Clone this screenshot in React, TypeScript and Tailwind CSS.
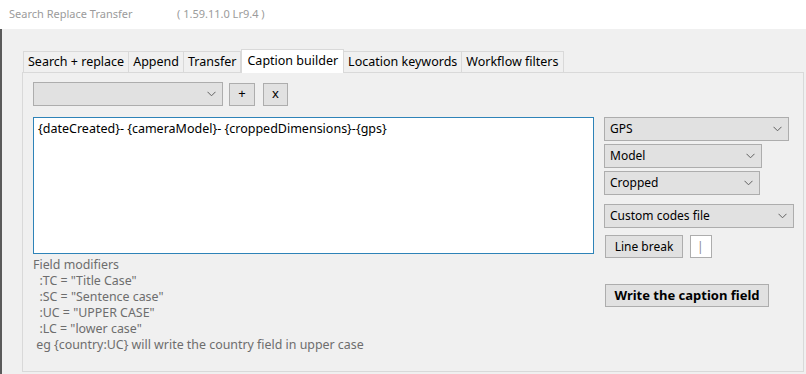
import React from "react";

const font = { fontFamily: '"Noto Sans", "Open Sans", sans-serif' };

function Chevron() {
  return (
    <svg width="9" height="6" viewBox="0 0 9 6" className="shrink-0">
      <path d="M0.5 0.8 L4.5 4.8 L8.5 0.8" fill="none" stroke="#606060" strokeWidth="1" />
    </svg>
  );
}

function Combo({ label, w }: { label: string; w: string }) {
  return (
    <div
      className={`${w} h-[24px] flex items-center justify-between pl-[5px] pr-[6px] bg-[#e1e1e1] border border-[#adadad] text-[12px] text-[#000]`}
    >
      <span>{label}</span>
      <Chevron />
    </div>
  );
}

const tabs = [
  "Search + replace",
  "Append",
  "Transfer",
  "Caption builder",
  "Location keywords",
  "Workflow filters",
];

export default function App() {
  return (
    <div className="w-[806px] h-[374px] bg-[#f0f0f0] flex flex-col overflow-hidden" style={font}>
      <div className="h-[29px] bg-white flex items-center text-[11px] text-[#9b9b9b] shrink-0">
        <span className="pl-[9px] w-[177px]">Search Replace Transfer</span>
        <span>( 1.59.11.0 Lr9.4 )</span>
      </div>
      <div className="flex-1 border-l-2 border-[#5a5a5a] pl-[20px] pr-[2px] pt-[20px] flex flex-col">
        <div className="flex items-end h-[23px] pl-[1px] text-[12.5px] text-black">
          {tabs.map((t) =>
            t === "Caption builder" ? (
              <div
                key={t}
                className="h-[24px] -mb-[1px] px-[5px] bg-white border border-b-0 border-[#d9d9d9] flex items-start pt-[2px] relative z-10"
              >
                {t}
              </div>
            ) : (
              <div
                key={t}
                className="h-[21px] px-[4px] bg-[#f0f0f0] border border-b-0 border-[#d9d9d9] -ml-[1px] first:ml-0 flex items-center"
              >
                {t}
              </div>
            )
          )}
        </div>
        <div className="flex-1 mb-[2px] border border-[#d9d9d9] bg-[#f0f0f0] pl-[10px] pt-[9px] flex">
          <div className="flex flex-col w-[561px]">
            <div className="flex items-center h-[24px]">
              <Combo label="" w="w-[190px]" />
              <div className="w-[26px] h-[23px] ml-[6px] bg-[#e1e1e1] border border-[#adadad] flex items-center justify-center text-[13px]">
                +
              </div>
              <div className="w-[25px] h-[23px] ml-[8px] bg-[#e1e1e1] border border-[#adadad] flex items-center justify-center text-[13px] leading-none pb-[2px]">
                x
              </div>
            </div>
            <div className="mt-[11px] h-[137px] bg-white border border-[#2e83b8] px-[4px] pt-[2px] text-[12.5px] text-black">
              {"{dateCreated}- {cameraModel}- {croppedDimensions}-{gps}"}
            </div>
            <div className="mt-[3px] text-[12.4px] leading-[16px] text-[#6d6d6d] whitespace-pre">
              <div>Field modifiers</div>
              <div>{'  :TC = "Title Case"'}</div>
              <div>{'  :SC = "Sentence case"'}</div>
              <div>{'  :UC = "UPPER CASE"'}</div>
              <div>{'  :LC = "lower case"'}</div>
              <div>{" eg {country:UC} will write the country field in upper case"}</div>
            </div>
          </div>
          <div className="ml-[10px] pt-[35px] flex flex-col text-[12px]">
            <Combo label="GPS" w="w-[185px]" />
            <div className="mt-[3px]">
              <Combo label="Model" w="w-[158px]" />
            </div>
            <div className="mt-[3px]">
              <Combo label="Cropped" w="w-[156px]" />
            </div>
            <div className="mt-[9px]">
              <Combo label="Custom codes file" w="w-[190px]" />
            </div>
            <div className="mt-[7px] flex items-center gap-[7px] pl-[1px]">
              <div className="w-[78px] h-[23px] bg-[#e1e1e1] border border-[#adadad] flex items-center justify-center">
                Line break
              </div>
              <div className="w-[22px] h-[23px] bg-white border border-[#adadad] flex items-center pl-[6px] text-[#8a8a8a] text-[12px]">
                |
              </div>
            </div>
            <div className="mt-[26px] pl-[1px]">
              <div className="w-[164px] h-[23px] bg-[#e1e1e1] border border-[#adadad] flex items-center justify-center font-bold text-[13px]">
                Write the caption field
              </div>
            </div>
          </div>
        </div>
      </div>
    </div>
  );
}
